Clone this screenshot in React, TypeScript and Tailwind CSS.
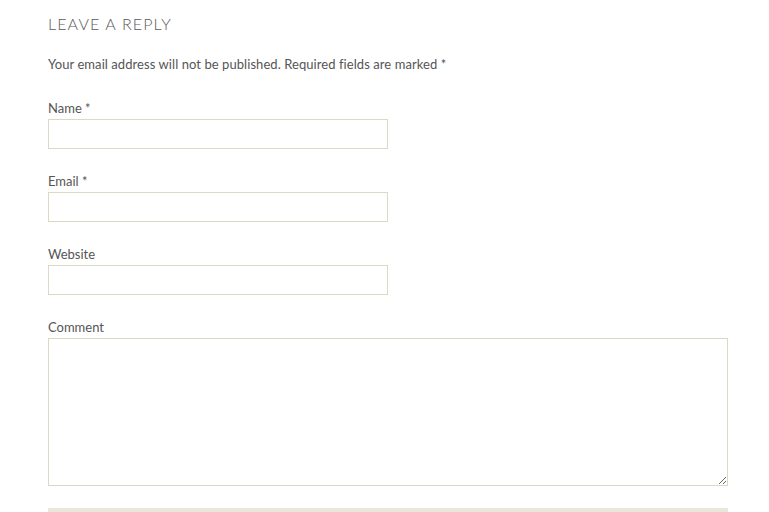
import type { ReactNode } from 'react'

function Field({ label, required, children }: { label: string; required?: boolean; children: ReactNode }) {
  return (
    <div className="mb-[22px]">
      <label className="block h-5 text-[13px] leading-5 text-[#555]">
        {label}
        {required && <span> *</span>}
      </label>
      <div className="mt-px">{children}</div>
    </div>
  )
}

export default function App() {
  return (
    <div className="h-[512px] overflow-hidden bg-white px-12 pt-3 font-['Lato','Open_Sans',sans-serif] text-[#555]">
      <div className="w-[680px]">
        <h3 className="h-6 text-[16px] font-light uppercase leading-6 tracking-[0.07em] text-[#5a5a5a]">
          Leave a Reply
        </h3>
        <p className="mt-[18px] h-5 text-[13px] leading-5 tracking-[0.005em]">
          Your email address will not be published. Required fields are marked <span>*</span>
        </p>
        <form className="mt-6">
          <Field label="Name" required>
            <input type="text" className="block h-[30px] w-[340px] border border-[#ddd8c6] bg-white outline-none" />
          </Field>
          <Field label="Email" required>
            <input type="email" className="block h-[30px] w-[340px] border border-[#ddd8c6] bg-white outline-none" />
          </Field>
          <Field label="Website">
            <input type="url" className="block h-[30px] w-[340px] border border-[#ddd8c6] bg-white outline-none" />
          </Field>
          <Field label="Comment">
            <textarea className="block h-[148px] w-[680px] border border-[#ddd8c6] bg-white outline-none" />
          </Field>
          <button type="button" className="block h-10 w-[680px] bg-[#e9e7dc]" />
        </form>
      </div>
    </div>
  )
}
